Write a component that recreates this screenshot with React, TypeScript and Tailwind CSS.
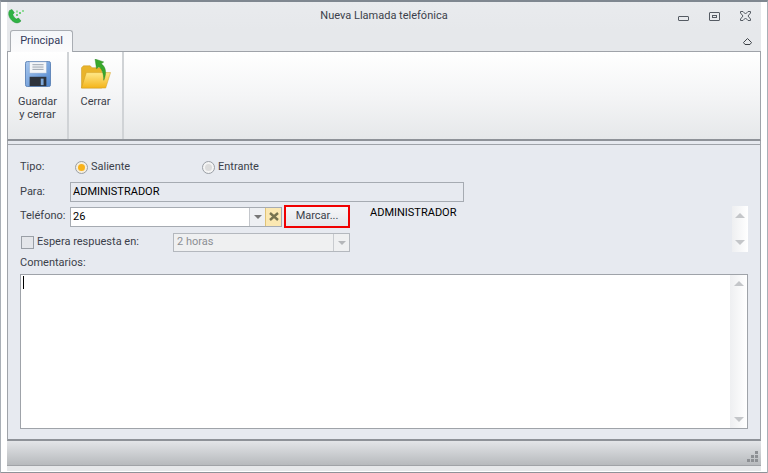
function PhoneLogo() {
  return (
    <svg width="18" height="18" viewBox="0 0 18 18">
      <path d="M2.5 3.5 C1 6 1.5 9.5 4 12.5 C6.5 15.5 9.5 16.5 12 15.5 L14 14 L11.5 11 L9.5 12 C8 11.5 6 9 5.8 7.2 L7.3 5.8 L5 2.5 Z" fill="#2fb344" stroke="#1c8f30" strokeWidth="0.5" />
      <rect x="9" y="7" width="2" height="2" fill="#6fd07a" />
      <rect x="12" y="5" width="2" height="2" fill="#6fd07a" />
      <rect x="9" y="3.5" width="2" height="2" fill="#8edb96" />
      <rect x="15" y="3" width="2" height="2" fill="#8edb96" />
    </svg>
  );
}

function SaveIcon() {
  return (
    <svg width="26" height="26" viewBox="0 0 28 28">
      <defs>
        <linearGradient id="disk" x1="0" y1="0" x2="1" y2="1">
          <stop offset="0" stopColor="#a9c8ee" />
          <stop offset="1" stopColor="#4f86cf" />
        </linearGradient>
      </defs>
      <rect x="0.5" y="0.5" width="27" height="27" rx="2" fill="url(#disk)" stroke="#5c82b5" />
      <rect x="5" y="1" width="18" height="12" fill="#f4f6f9" stroke="#9fb4cf" strokeWidth="0.5" />
      <path d="M8 4h12M8 6.5h12M8 9h12" stroke="#7b8794" strokeWidth="0.8" />
      <rect x="5" y="17" width="18" height="10" fill="#2c323b" />
      <rect x="17" y="19" width="3" height="7" fill="#7fa8d8" />
    </svg>
  );
}

function FolderIcon() {
  return (
    <svg width="32" height="31" viewBox="0 0 32 32">
      <defs>
        <linearGradient id="folder" x1="0" y1="0" x2="0" y2="1">
          <stop offset="0" stopColor="#ffe98a" />
          <stop offset="1" stopColor="#f4b41a" />
        </linearGradient>
      </defs>
      <path d="M1 30 V9 L3 7 H10 L12 9 H22 V30 Z" fill="#e9b42b" stroke="#c99418" strokeWidth="0.5" />
      <path d="M1 30 L6 14 H31 L26 30 Z" fill="url(#folder)" stroke="#d19c1c" strokeWidth="0.5" />
      <path d="M15 0 L24 3 L21.5 5 C26 8 27.5 14 24 22 C24 15 22 10 19 8 L16.5 10 Z" fill="#39a82c" stroke="#23801c" strokeWidth="0.4" />
    </svg>
  );
}

function CloseGlyph() {
  return (
    <svg width="11" height="10" viewBox="0 0 11 10" fill="none" stroke="#555b63" strokeWidth="1">
      <path d="M0.5 0.5 H3 L5.5 3 L8 0.5 H10.5 V2 L8 5 L10.5 8 V9.5 H8 L5.5 7 L3 9.5 H0.5 V8 L3 5 L0.5 2 Z" />
    </svg>
  );
}

function CollapseGlyph() {
  return (
    <svg width="9" height="7" viewBox="0 0 9 7" fill="none" stroke="#3f4348" strokeWidth="1">
      <path d="M0.5 4.5 L4.5 0.5 L8.5 4.5 L7 6.5 H2 Z" />
    </svg>
  );
}

function ClearGlyph() {
  return (
    <svg width="10" height="9" viewBox="0 0 10 9" fill="none" stroke="#77734f" strokeWidth="2.4">
      <path d="M1 1 L9 8 M9 1 L1 8" />
    </svg>
  );
}

function Arrow({ up, className }: { up?: boolean; className: string }) {
  return up ? (
    <div className={`w-0 h-0 border-x-[5px] border-x-transparent border-b-[5px] ${className}`} />
  ) : (
    <div className={`w-0 h-0 border-x-[5px] border-x-transparent border-t-[5px] ${className}`} />
  );
}

function SmallArrow({ className }: { className: string }) {
  return <div className={`w-0 h-0 border-x-[4px] border-x-transparent border-t-[4px] ${className}`} />;
}

function Radio({ checked }: { checked?: boolean }) {
  return (
    <div
      className={
        checked
          ? "w-[13px] h-[13px] rounded-full border border-[#9a9fa6] bg-[#f5eedd] flex items-center justify-center"
          : "w-[13px] h-[13px] rounded-full border border-[#9a9fa6] bg-[#f4f4f4] flex items-center justify-center"
      }
    >
      <div className={checked ? "w-[7px] h-[7px] rounded-full bg-[#f7b21c]" : "w-[7px] h-[7px] rounded-full bg-[#dcdcdc]"} />
    </div>
  );
}

export default function App() {
  return (
    <div className="w-[768px] h-[473px] bg-white border-t-2 border-x border-t-[#7f8790] border-x-[#a9afb6] flex flex-col overflow-hidden text-[11px] text-[#3b3f4a] font-['Roboto','Liberation_Sans',sans-serif]">
      {/* Title bar */}
      <div className="h-[28px] mx-[6px] bg-gradient-to-b from-[#e9ebee] to-[#e6e8eb] flex items-center shrink-0">
        <div className="w-[64px]">
          <PhoneLogo />
        </div>
        <div className="flex-1 text-center text-[#3b3f4a]">Nueva Llamada telefónica</div>
        <div className="w-[64px] flex items-center justify-end gap-[20px] pr-[10px]">
          <div className="w-[11px] h-[5px] shrink-0 border border-[#555b63] rounded-[1px] mt-[4px]" />
          <div className="w-[11px] h-[9px] shrink-0 border border-[#555b63] rounded-[1px] flex items-center justify-center">
            <div className="w-[5px] h-[3px] border border-[#555b63]" />
          </div>
          <div className="shrink-0">
            <CloseGlyph />
          </div>
        </div>
      </div>

      {/* Tabs */}
      <div className="h-[22px] mx-[6px] border-b border-[#9fa3a9] bg-[#e6e8eb] flex items-end justify-between shrink-0 pl-[3px] pr-[9px]">
        <div className="h-[22px] w-[63px] -mb-px bg-gradient-to-b from-[#f4f6f9] to-[#fbfbfc] border border-b-0 border-[#a9adb3] rounded-t-[3px] flex items-center justify-center text-[#33395a]">
          Principal
        </div>
        <div className="mb-[6px]">
          <CollapseGlyph />
        </div>
      </div>

      {/* Ribbon */}
      <div className="h-[89px] mx-[6px] border-x border-[#9fa3a9] border-b-2 border-b-[#8e9298] bg-gradient-to-b from-white via-[#f4f5f6] to-[#e6e8ea] flex shrink-0 text-[#3b3f4a]">
        <div className="w-[61px] border-r-2 border-[#d0d3d6] flex flex-col items-center pt-[9px]">
          <SaveIcon />
          <div className="text-center leading-[13px] mt-[8px]">
            Guardar
            <br />y cerrar
          </div>
        </div>
        <div className="w-[55px] border-r-2 border-[#d0d3d6] flex flex-col items-center pt-[7px]">
          <FolderIcon />
          <div className="text-center leading-[13px] mt-[5px]">Cerrar</div>
        </div>
      </div>

      {/* Content */}
      <div className="h-[3px] mx-[6px] bg-[#e6e9ef] border-x border-[#9fa3a9] shrink-0" />
      <div className="h-[297px] mx-[6px] border border-[#9fa3a9] border-b-2 border-b-[#8e9298] bg-[#e7eaf0] px-[12px] flex flex-col shrink-0 relative">
        <div className="h-[13px] shrink-0" />
        <div className="flex items-center h-[18px] shrink-0 pt-[1px]">
          <div className="w-[55px]">Tipo:</div>
          <Radio checked />
          <div className="ml-[3px] w-[111px]">Saliente</div>
          <Radio />
          <div className="ml-[3px]">Entrante</div>
        </div>
        <div className="flex items-center h-[20px] mt-[6px] shrink-0">
          <div className="w-[50px]">Para:</div>
          <div className="w-[394px] h-[20px] border border-[#a6abb2] bg-[#e7eaf0] flex items-center pl-[2px] text-black">
            ADMINISTRADOR
          </div>
        </div>
        <div className="flex items-center h-[23px] mt-[3px] shrink-0">
          <div className="w-[50px]">Teléfono:</div>
          <div className="w-[212px] h-[20px] border border-[#a6abb2] bg-white flex items-stretch">
            <div className="flex-1 pl-[2px] text-black leading-[18px]">26</div>
            <div className="w-[16px] border-l border-[#c4c7cc] bg-[#eef0f3] flex items-center justify-center">
              <SmallArrow className="border-t-[#777]" />
            </div>
            <div className="w-[16px] border-l border-[#e0c276] bg-[#fbe8b2] flex items-center justify-center">
              <ClearGlyph />
            </div>
          </div>
          <div className="ml-[2px] w-[66px] h-[23px] border-2 border-[#f00000] bg-gradient-to-b from-[#f5f6f8] to-[#e4e6ea] flex items-center justify-center">Marcar...</div>
          <div className="ml-[20px] -mt-[7px] text-black">ADMINISTRADOR</div>
          <div className="absolute right-[12px] top-[61px] w-[16px] h-[46px] bg-gradient-to-r from-[#eeeff1] to-white flex flex-col items-center justify-between py-[7px]">
            <Arrow up className="border-b-[#c4c6c9]" />
            <Arrow className="border-t-[#c4c6c9]" />
          </div>
        </div>
        <div className="flex items-center h-[19px] mt-[5px] shrink-0">
          <div className="w-[13px] h-[13px] ml-[1px] border border-[#9a9fa6] bg-[#e4e6ea]" />
          <div className="ml-[3px] w-[136px]">Espera respuesta en:</div>
          <div className="w-[177px] h-[19px] border border-[#b4b8be] bg-[#eff0f1] flex items-center text-[#8c8f94]">
            <div className="flex-1 pl-[3px]">2 horas</div>
            <div className="w-[16px] h-full border-l border-[#c8cbcf] flex items-center justify-center">
              <SmallArrow className="border-t-[#b4b6b9]" />
            </div>
          </div>
        </div>
        <div className="h-[14px] mt-[4px] leading-[14px] shrink-0">Comentarios:</div>
        <div className="mt-[4px] w-[728px] h-[155px] border border-[#9fa3a9] bg-white flex shrink-0">
          <div className="flex-1 pt-[1px] pl-[2px]">
            <div className="w-px h-[13px] bg-black" />
          </div>
          <div className="w-[17px] bg-gradient-to-r from-[#eeeff1] to-white flex flex-col items-center justify-between py-[6px]">
            <Arrow up className="border-b-[#c4c6c9]" />
            <Arrow className="border-t-[#c4c6c9]" />
          </div>
        </div>
      </div>

      {/* Status bar */}
      <div className="h-[25px] mx-[6px] border-b border-[#a0a3a7] bg-gradient-to-b from-[#e3e5e8] to-[#b7babd] flex justify-end items-end shrink-0 pr-[3px] pb-[3px]">
        <div className="grid grid-cols-3 gap-[1px] w-[11px]">
          <span />
          <span />
          <span className="w-[3px] h-[3px] bg-[#8d9094]" />
          <span />
          <span className="w-[3px] h-[3px] bg-[#8d9094]" />
          <span className="w-[3px] h-[3px] bg-[#8d9094]" />
          <span className="w-[3px] h-[3px] bg-[#8d9094]" />
          <span className="w-[3px] h-[3px] bg-[#8d9094]" />
          <span className="w-[3px] h-[3px] bg-[#8d9094]" />
        </div>
      </div>
      <div className="h-[5px] mx-[6px] bg-[#e6e8ea] shrink-0" />
      <div className="flex-1 bg-white border-b border-[#8e9298]" />
    </div>
  );
}
